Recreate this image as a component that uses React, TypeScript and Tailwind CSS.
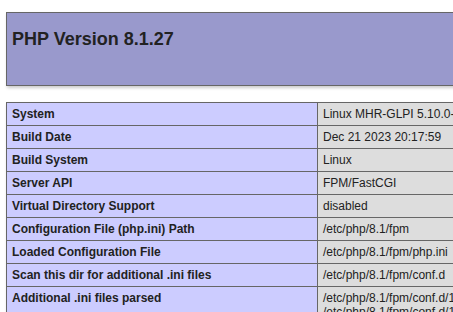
const rows: [string, string[]][] = [
  ['System', ['Linux MHR-GLPI 5.10.0-28-amd64 #1 SMP Debian 5.10.209-2 (2024-01-31) x86_64']],
  ['Build Date', ['Dec 21 2023 20:17:59']],
  ['Build System', ['Linux']],
  ['Server API', ['FPM/FastCGI']],
  ['Virtual Directory Support', ['disabled']],
  ['Configuration File (php.ini) Path', ['/etc/php/8.1/fpm']],
  ['Loaded Configuration File', ['/etc/php/8.1/fpm/php.ini']],
  ['Scan this dir for additional .ini files', ['/etc/php/8.1/fpm/conf.d']],
  [
    'Additional .ini files parsed',
    [
      '/etc/php/8.1/fpm/conf.d/10-mysqlnd.ini,',
      '/etc/php/8.1/fpm/conf.d/10-opcache.ini,',
      '/etc/php/8.1/fpm/conf.d/10-pdo.ini,',
      '/etc/php/8.1/fpm/conf.d/15-xml.ini,',
    ],
  ],
];

export default function App() {
  return (
    <div className="h-screen w-screen overflow-hidden bg-white text-[#222] font-['Liberation_Sans',Arial,sans-serif]">
      <div className="w-[960px] pl-[6px] pt-[12px]">
        {/* version banner */}
        <div className="h-[74px] w-[934px] border border-[#666] bg-[#99c] px-[5px] pt-[16px] shadow-[1px_2px_3px_#ccc]">
          <h1 className="text-[18px] font-bold leading-[21px]">PHP Version 8.1.27</h1>
        </div>

        <table className="mt-[16px] w-[934px] border-collapse text-[12px] shadow-[1px_2px_3px_#ccc]">
          <tbody>
            {rows.map(([label, values]) => (
              <tr key={label}>
                <td className="w-[311px] border border-[#666] bg-[#ccf] px-[5px] py-[4px] align-baseline font-bold leading-[14px]">
                  {label}
                </td>
                <td className="border border-[#666] bg-[#ddd] px-[5px] py-[4px] align-baseline leading-[14px]">
                  {values.map((v, i) => (
                    <div key={i} className="whitespace-nowrap">{v}</div>
                  ))}
                </td>
              </tr>
            ))}
          </tbody>
        </table>
      </div>
    </div>
  );
}
